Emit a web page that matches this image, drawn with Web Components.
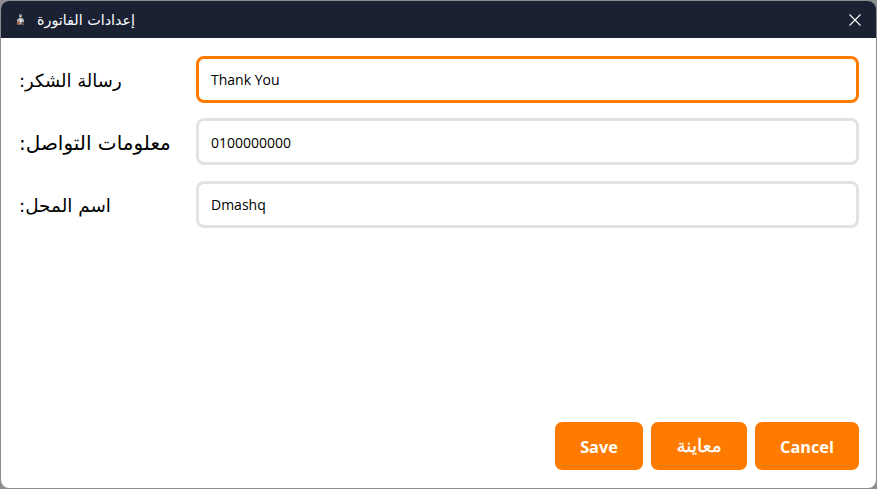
<!DOCTYPE html>
<html lang="ar">
<head>
<meta charset="utf-8">
<title>إعدادات الفاتورة</title>
<style>
    html, body { margin: 0; height: 100%; background: #8d8d8f; overflow: hidden; }
    body { font-family: "Open Sans", "DejaVu Sans", sans-serif; }
</style>
</head>
<body>

<invoice-window heading="إعدادات الفاتورة">
    <settings-field label="رسالة الشكر:" value="Thank You" focused style="--label-size: 18px"></settings-field>
    <settings-field label="معلومات التواصل:" value="0100000000"></settings-field>
    <settings-field label="اسم المحل:" value="Dmashq" style="--label-size: 18.4px"></settings-field>

    <action-button slot="actions">Save</action-button>
    <action-button slot="actions" style="width: 96px; padding: 0 0 3px; font-weight: normal; font-size: 18.5px; -webkit-text-stroke: 0.3px #fff">معاينة</action-button>
    <action-button slot="actions" style="width: 104px">Cancel</action-button>
</invoice-window>

<script>
(function () {

    let windowTemplate = `
        <style>
            :host {
                display: flex;
                flex-direction: column;
                box-sizing: border-box;
                width: 875px;
                height: 487px;
                margin: 1px 0 0 1px;
                background: #fff;
                border-radius: 8px;
                overflow: hidden;
            }
            .title {
                display: flex;
                align-items: center;
                flex: none;
                height: 37px;
                padding: 0 15px;
                background: #1a2133;
                color: #fff;
                font: 14.3px "DejaVu Sans", sans-serif;
            }
            .title svg.logo { margin-right: 12px; }
            .title .grow { flex: 1; }
            .form {
                display: flex;
                flex-direction: column;
                gap: 15.5px;
                flex: 1;
                padding: 17.9px 17px 0 18px;
            }
            .actions {
                display: flex;
                justify-content: flex-end;
                gap: 8px;
                padding: 0 17px 18px 0;
            }
        </style>
        <div class="title">
            <svg class="logo" width="9" height="11" viewBox="0 0 9 11">
                <rect x="3" y="0" width="3" height="3" fill="#6f7480"/>
                <rect x="3.5" y="1.5" width="2" height="2" fill="#d8c4b4"/>
                <path d="M1 10.5V5.5l2-1.500h3l2 1.500v5z" fill="#aeb1b8"/>
                <rect x="1" y="7.500" width="2.500" height="3" fill="#a9603c"/>
                <rect x="4" y="5" width="1.500" height="3" fill="#f2f2f2"/>
                <rect x="5.500" y="8" width="2.500" height="2.500" fill="#5f4a46"/>
            </svg>
            <span dir="rtl" id="heading"></span>
            <span class="grow"></span>
            <svg width="12" height="12" viewBox="0 0 12 12" fill="none" stroke="#fff" stroke-width="1.1">
                <path d="M.5.5l11 11M11.5.5l-11 11"/>
            </svg>
        </div>
        <div class="form"><slot></slot></div>
        <div class="actions"><slot name="actions"></slot></div>
    `;

    class InvoiceWindow extends HTMLElement {
        constructor() {
            super();
            this.attachShadow({ mode: 'open' }).innerHTML = windowTemplate;
        }

        connectedCallback() {
            this.shadowRoot.querySelector('#heading').textContent = this.getAttribute('heading');
        }
    }

    let fieldTemplate = `
        <style>
            :host {
                display: grid;
                grid-template-columns: 177px 1fr;
                align-items: center;
            }
            .label {
                padding-top: 3px;
                font: var(--label-size, 20px) "DejaVu Sans", sans-serif;
                color: #000;
                justify-self: start;
            }
            .box {
                box-sizing: border-box;
                height: 47px;
                padding: 1px 12px 0;
                display: flex;
                align-items: center;
                background: #fff;
                border: 3px solid #e2e2e2;
                border-radius: 8px;
                font: 14px "Open Sans", sans-serif;
                color: #000;
            }
            :host([focused]) .box { border-color: #ff7b00; }
        </style>
        <div class="label" dir="rtl"></div>
        <div class="box"></div>
    `;

    class SettingsField extends HTMLElement {
        constructor() {
            super();
            this.attachShadow({ mode: 'open' }).innerHTML = fieldTemplate;
        }

        connectedCallback() {
            this.shadowRoot.querySelector('.label').textContent = this.getAttribute('label');
            this.shadowRoot.querySelector('.box').textContent = this.getAttribute('value');
        }
    }

    let buttonTemplate = `
        <style>
            :host {
                display: flex;
                align-items: center;
                justify-content: center;
                box-sizing: border-box;
                width: 88px;
                height: 48px;
                padding-top: 2px;
                background: #ff7b00;
                border-radius: 7px;
                color: #fff;
                font: bold 16.3px "Open Sans", "DejaVu Sans", sans-serif;
            }
        </style>
        <slot></slot>
    `;

    class ActionButton extends HTMLElement {
        constructor() {
            super();
            this.attachShadow({ mode: 'open' }).innerHTML = buttonTemplate;
        }
    }

    customElements.define('invoice-window', InvoiceWindow);
    customElements.define('settings-field', SettingsField);
    customElements.define('action-button', ActionButton);

})();
</script>
</body>
</html>
